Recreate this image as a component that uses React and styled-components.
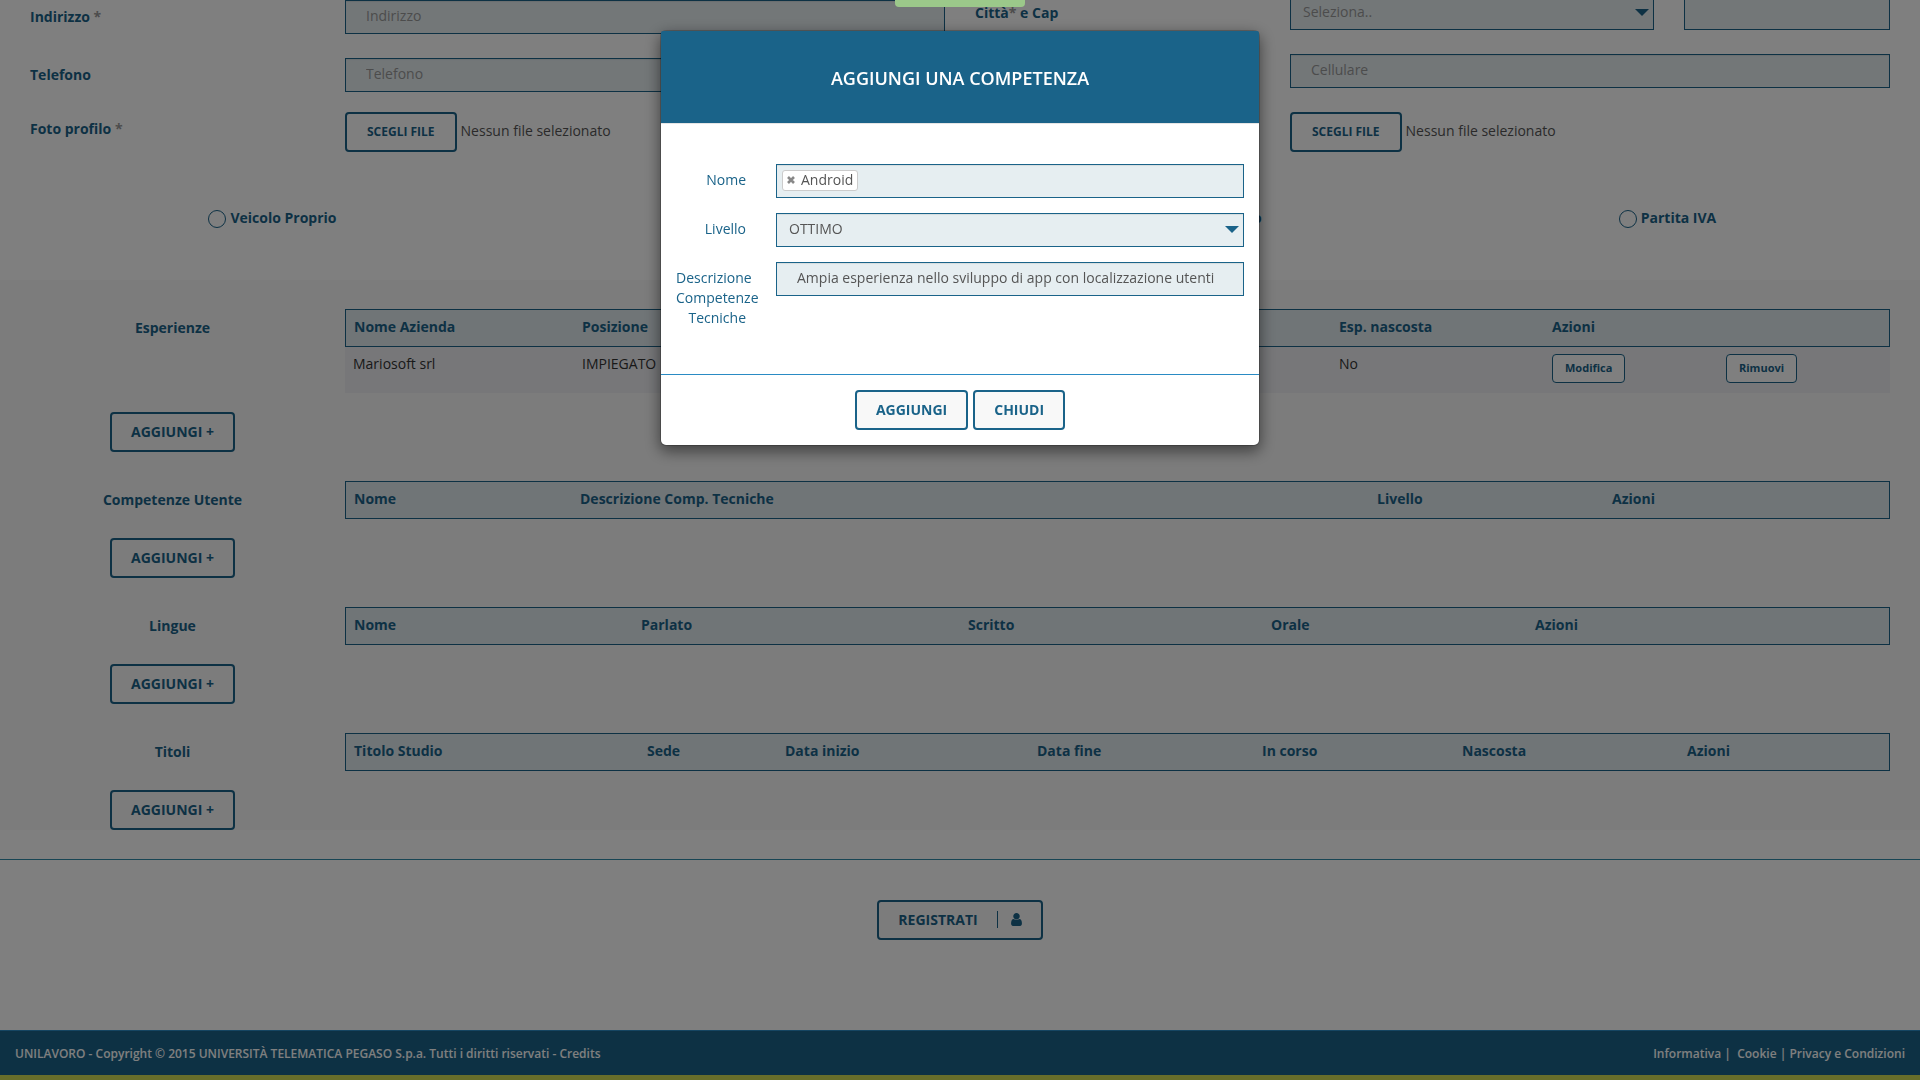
//-----import 외부
import React, { useState } from "react";
import styled, { createGlobalStyle, css } from "styled-components";

//-----테마
const colors = {
  main: "#1a6389",
  line: "#2a8bc4",
  rule: "#308ba8",
  field: "#e6eef1",
  head: "#e1eaef",
  row: "#eeeff3",
  section: "#f8f8f8",
  text: "#555555",
  placeholder: "#999999",
  green: "#9bc88a",
  olive: "#cfdc56",
};

//-----데이터
const sections = [
  {
    title: "Esperienze",
    columns: [
      { name: "Nome Azienda", width: 229 },
      { name: "Posizione", width: 757 },
      { name: "Esp. nascosta", width: 213 },
      { name: "Azioni", width: 174 },
      { name: "", width: 172 },
    ],
    rows: [["Mariosoft srl", "IMPIEGATO", "No"]],
  },
  {
    title: "Competenze Utente",
    columns: [
      { name: "Nome", width: 227 },
      { name: "Descrizione Comp. Tecniche", width: 797 },
      { name: "Livello", width: 235 },
      { name: "Azioni", width: 286 },
    ],
    rows: [],
  },
  {
    title: "Lingue",
    columns: [
      { name: "Nome", width: 288 },
      { name: "Parlato", width: 327 },
      { name: "Scritto", width: 303 },
      { name: "Orale", width: 264 },
      { name: "Azioni", width: 363 },
    ],
    rows: [],
  },
  {
    title: "Titoli",
    columns: [
      { name: "Titolo Studio", width: 294 },
      { name: "Sede", width: 138 },
      { name: "Data inizio", width: 252 },
      { name: "Data fine", width: 225 },
      { name: "In corso", width: 200 },
      { name: "Nascosta", width: 225 },
      { name: "Azioni", width: 211 },
    ],
    rows: [],
  },
];
const options = [
  { name: "Veicolo Proprio", column: 1 },
  { name: "Lavoro estero", column: 3 },
  { name: "Partita IVA", column: 4 },
];

//-----파일 선택
function FilePicker({ id }) {
  return (
    <FileBox>
      <FileInput type="file" id={id} />
      <FileButton htmlFor={id}>SCEGLI FILE</FileButton>
      <FileStatus>Nessun file selezionato</FileStatus>
    </FileBox>
  );
}

//-----목록 섹션 (제목 + 표 + 추가 버튼)
function ListSection({ title, columns, rows }) {
  return (
    <SectionRow>
      <SectionTitle>{title}</SectionTitle>
      <TableBox>
        <Table>
          <colgroup>
            {columns.map((col, i) => (
              <Col key={i} $width={col.width} />
            ))}
          </colgroup>
          <thead>
            <tr>
              {columns.map((col, i) => (
                <Th key={i}>{col.name}</Th>
              ))}
            </tr>
          </thead>
          <tbody>
            {rows.map((row, i) => (
              <tr key={i}>
                {row.map((cell) => (
                  <Td key={cell}>{cell}</Td>
                ))}
                <Td>
                  <SmallButton type="button">Modifica</SmallButton>
                </Td>
                <Td>
                  <SmallButton type="button">Rimuovi</SmallButton>
                </Td>
              </tr>
            ))}
          </tbody>
        </Table>
      </TableBox>
      <AddBox>
        <Button type="button">AGGIUNGI +</Button>
      </AddBox>
    </SectionRow>
  );
}

//-----모달
function SkillModal() {
  const [level, setLevel] = useState("OTTIMO");
  const [description, setDescription] = useState(
    "Ampia esperienza nello sviluppo di app con localizzazione utenti"
  );

  return (
    <Modal role="dialog" aria-labelledby="modal-title">
      <ModalHeader>
        <ModalTitle id="modal-title">AGGIUNGI UNA COMPETENZA</ModalTitle>
      </ModalHeader>
      <ModalBody>
        <ModalRow>
          <ModalLabel htmlFor="skill-name">Nome</ModalLabel>
          <TokenField>
            <Token>
              <TokenRemove type="button" aria-label="Rimuovi Android">
                <svg viewBox="0 0 8 8" width="8" height="8">
                  <path
                    d="M1 1 L7 7 M7 1 L1 7"
                    stroke="currentColor"
                    strokeWidth="2.6"
                  />
                </svg>
              </TokenRemove>
              Android
            </Token>
            <TokenInput id="skill-name" type="text" />
          </TokenField>
        </ModalRow>
        <ModalRow>
          <ModalLabel htmlFor="skill-level">Livello</ModalLabel>
          <SelectBox>
            <Select
              id="skill-level"
              value={level}
              onChange={(e) => setLevel(e.target.value)}
            >
              <option>OTTIMO</option>
              <option>BUONO</option>
            </Select>
            <Arrow />
          </SelectBox>
        </ModalRow>
        <ModalRow>
          <ModalLabel htmlFor="skill-description">
            Descrizione Competenze Tecniche
          </ModalLabel>
          <Input
            id="skill-description"
            type="text"
            value={description}
            onChange={(e) => setDescription(e.target.value)}
          />
        </ModalRow>
      </ModalBody>
      <ModalFooter>
        <Button type="button">AGGIUNGI</Button>
        <Button type="button">CHIUDI</Button>
      </ModalFooter>
    </Modal>
  );
}

//-----메인
function App() {
  return (
    <>
      <GlobalStyle />
      <Page>
        <main>
          <FieldColumns>
            <LeftColumn>
              <FieldRow>
                <Label htmlFor="address">
                  Indirizzo <Star>*</Star>
                </Label>
                <Input id="address" type="text" placeholder="Indirizzo" />
              </FieldRow>
              <FieldRow>
                <Label htmlFor="phone">Telefono</Label>
                <Input id="phone" type="text" placeholder="Telefono" />
              </FieldRow>
            </LeftColumn>
            <Column>
              <FieldRow>
                <Label htmlFor="city">
                  Città<Star>*</Star> e Cap
                </Label>
                <CityBox>
                  <SelectBox>
                    <Select id="city" $empty defaultValue="">
                      <option value="">Seleziona..</option>
                    </Select>
                    <Arrow />
                  </SelectBox>
                  <Input type="text" aria-label="Cap" />
                </CityBox>
              </FieldRow>
              <FieldRow>
                <span />
                <Input
                  type="text"
                  placeholder="Cellulare"
                  aria-label="Cellulare"
                />
              </FieldRow>
            </Column>
            <FieldRow>
              <Label htmlFor="photo">
                Foto profilo <Star>*</Star>
              </Label>
              <FilePicker id="photo" />
            </FieldRow>
            <FieldRow>
              <span />
              <FilePicker id="attachment" />
            </FieldRow>
          </FieldColumns>

          <RadioRow>
            {options.map(({ name, column }) => (
              <RadioLabel key={name} $column={column}>
                <Radio type="radio" name={name} />
                {name}
              </RadioLabel>
            ))}
          </RadioRow>

          <Sections>
            {sections.map((section) => (
              <ListSection key={section.title} {...section} />
            ))}
          </Sections>

          <SubmitBox>
            <Button type="submit">
              REGISTRATI
              <IconBox>
                <svg viewBox="0 128 1280 1536" width="11" height="13">
                  <path
                    fill="currentColor"
                    d="M1280 1399q0 109-62.5 187t-150.5 78h-854q-88 0-150.5-78t-62.5-187q0-85 8.5-160.5t31.5-152 58.5-131 94-89 134.5-34.5q131 128 313 128t313-128q76 0 134.5 34.5t94 89 58.5 131 31.5 152 8.5 160.5zM1024 512q0 159-112.5 271.5t-271.5 112.5-271.5-112.5-112.5-271.5 112.5-271.5 271.5-112.5 271.5 112.5 112.5 271.5z"
                  />
                </svg>
              </IconBox>
            </Button>
          </SubmitBox>
        </main>

        <Footer>
          <span>
            UNILAVORO - Copyright © 2015 UNIVERSITÀ TELEMATICA PEGASO S.p.a.
            Tutti i diritti riservati - <FooterLink href="#">Credits</FooterLink>
          </span>
          <span>
            <FooterLink href="#">Informativa</FooterLink> |&nbsp;{" "}
            <FooterLink href="#">Cookie</FooterLink> |{" "}
            <FooterLink href="#">Privacy e Condizioni</FooterLink>
          </span>
        </Footer>
      </Page>

      <Overlay>
        <Notice />
        <SkillModal />
      </Overlay>
    </>
  );
}

export default App;

//-----스타일
const GlobalStyle = createGlobalStyle`
  * {
    box-sizing: border-box;
  }
  body {
    margin: 0;
    background-color: #ffffff;
    color: ${colors.text};
    font-family: "Open Sans", "Noto Sans", sans-serif;
    font-size: 14px;
    line-height: 20px;
  }
  button, input, select {
    font-family: inherit;
    font-size: 14px;
  }
`;

//공통 컨트롤
const fieldStyle = css`
  width: 100%;
  height: 34px;
  background-color: ${colors.field};
  border: 1px solid ${colors.main};
  border-radius: 0;
  box-shadow: inset 0 1px 1px rgba(0, 0, 0, 0.075);
  color: ${colors.text};
`;
const buttonStyle = css`
  display: inline-flex;
  align-items: center;
  justify-content: center;
  height: 40px;
  padding: 0 19px 2px;
  background-color: ${colors.section};
  border: 2px solid ${colors.main};
  border-radius: 4px;
  color: ${colors.main};
  font-weight: 700;
  cursor: pointer;
`;
const Input = styled.input`
  ${fieldStyle}
  min-width: 0;
  padding: 0 20px 4px;

  &::placeholder {
    color: ${colors.placeholder};
  }
`;
const SelectBox = styled.div`
  position: relative;
`;
const Select = styled.select`
  ${fieldStyle}
  appearance: none;
  padding: 0 24px 4px 12px;
  ${(props) => props.$empty && `color: ${colors.placeholder};`}
`;
const Arrow = styled.span`
  position: absolute;
  top: 13px;
  right: 5px;
  border: 7px solid transparent;
  border-top-color: ${colors.main};
  border-bottom: 0;
  pointer-events: none;
`;
const Button = styled.button`
  ${buttonStyle}
`;
const SmallButton = styled.button`
  height: 29px;
  padding: 0 12px 2px;
  background-color: #ffffff;
  border: 1px solid ${colors.main};
  border-radius: 4px;
  color: ${colors.main};
  font-size: 11px;
  font-weight: 700;
`;

//페이지
const Page = styled.div`
  overflow: hidden;
`;
const FieldColumns = styled.div`
  display: grid;
  grid-template-columns: 1fr 1fr;
  row-gap: 20px;
  margin-top: -4px;
  padding: 0 15px;
`;
const Column = styled.div`
  display: flex;
  flex-direction: column;
  gap: 24px;
`;
const LeftColumn = styled(Column)`
  padding-top: 4px;
`;
const FieldRow = styled.div`
  display: grid;
  grid-template-columns: calc((100% + 30px) / 3 - 15px) 1fr;
  column-gap: 15px;
  padding: 0 15px;
`;
const Label = styled.label`
  padding-top: 7px;
  color: ${colors.main};
  font-weight: 700;
`;
const Star = styled.span`
  color: ${colors.placeholder};
`;
const CityBox = styled.div`
  display: grid;
  grid-template-columns: 364fr 206fr;
  gap: 30px;
`;
const FileBox = styled.div`
  display: flex;
  align-items: center;
  gap: 4px;
`;
const FileInput = styled.input`
  position: absolute;
  width: 1px;
  height: 1px;
  opacity: 0;
`;
const FileButton = styled.label`
  ${buttonStyle}
  padding: 0 20px 1px;
  background-color: #ffffff;
  font-size: 12px;
`;
const FileStatus = styled.span`
  padding-bottom: 2px;
`;
const RadioRow = styled.div`
  display: grid;
  grid-template-columns: repeat(4, 1fr);
  padding: 56px 20px 52px 40px;
`;
const RadioLabel = styled.label`
  display: flex;
  grid-column: ${(props) => props.$column};
  justify-content: center;
  gap: 4px;
  color: ${colors.main};
  font-weight: 700;
`;
const Radio = styled.input`
  appearance: none;
  width: 18px;
  height: 18px;
  margin: 2px 0 0;
  border: 1px solid ${colors.main};
  border-radius: 50%;
`;

//목록
const Sections = styled.div`
  padding: 0 15px;
  background-color: ${colors.section};
`;
const SectionRow = styled.section`
  display: grid;
  grid-template-columns: 1fr 5fr;
  row-gap: 19px;
  padding-top: 29px;
`;
const SectionTitle = styled.h2`
  margin: 0;
  padding-top: 9px;
  color: ${colors.main};
  font-size: 14px;
  line-height: 20px;
  text-align: center;
`;
const TableBox = styled.div`
  padding: 0 15px;
`;
const Table = styled.table`
  width: 100%;
  table-layout: fixed;
  border-collapse: separate;
  border-spacing: 0;
`;
const Col = styled.col`
  width: ${(props) => props.$width}px;
`;
const Th = styled.th`
  height: 38px;
  padding: 0 8px 2px;
  background-color: ${colors.head};
  border: solid ${colors.main};
  border-width: 1px 0;
  color: ${colors.main};
  text-align: left;

  &:first-child {
    border-left-width: 1px;
  }
  &:last-child {
    border-right-width: 1px;
  }
`;
const Td = styled.td`
  height: 46px;
  padding: 7px 8px;
  background-color: ${colors.row};
  color: #333333;
  vertical-align: top;
`;
const AddBox = styled.div`
  text-align: center;
`;
const SubmitBox = styled.div`
  display: flex;
  justify-content: center;
  margin-top: 29px;
  padding: 40px 0 90px;
  border-top: 1px solid ${colors.rule};
`;
const IconBox = styled.span`
  display: flex;
  align-items: center;
  height: 17px;
  margin-left: 19px;
  padding-left: 13px;
  border-left: 1px solid ${colors.main};
`;
const Footer = styled.footer`
  display: flex;
  align-items: center;
  justify-content: space-between;
  height: 50px;
  padding: 2px 15px 0;
  background-color: ${colors.main};
  border-top: 1px solid ${colors.line};
  border-bottom: 5px solid ${colors.olive};
  color: #ffffff;
  font-size: 12px;
  font-weight: 600;
`;
const FooterLink = styled.a`
  color: inherit;
  text-decoration: none;
`;

//모달
const Overlay = styled.div`
  position: fixed;
  inset: 0;
  padding-top: 30px;
  background-color: rgba(0, 0, 0, 0.5);
`;
const Notice = styled.div`
  position: absolute;
  top: 0;
  left: 50%;
  width: 130px;
  height: 7px;
  margin-left: -65px;
  background-color: ${colors.green};
  border-radius: 0 0 4px 4px;
`;
const Modal = styled.div`
  width: 600px;
  max-width: 100%;
  margin: 0 auto;
  background-color: #ffffff;
  background-clip: padding-box;
  border: 1px solid rgba(0, 0, 0, 0.2);
  border-radius: 6px;
  box-shadow: 0 5px 15px rgba(0, 0, 0, 0.5);
`;
const ModalHeader = styled.div`
  padding: 35px 15px 33px;
  background-color: ${colors.main};
  border-bottom: 1px solid #e5e5e5;
  border-radius: 2px 2px 0 0;
`;
const ModalTitle = styled.h4`
  margin: 0;
  color: #ffffff;
  font-size: 18px;
  font-weight: 600;
  line-height: 24px;
  text-align: center;
`;
const ModalBody = styled.div`
  display: flex;
  flex-direction: column;
  gap: 15px;
  padding: 40px 0 46px;
`;
const ModalRow = styled.div`
  display: grid;
  grid-template-columns: 70px 1fr;
  column-gap: 30px;
  padding: 0 15px;
`;
const ModalLabel = styled.label`
  padding-top: 6px;
  color: ${colors.main};
  text-align: right;
`;
const TokenField = styled.div`
  ${fieldStyle}
  display: flex;
  align-items: center;
  gap: 5px;
  padding: 0 5px 2px;
`;
const Token = styled.span`
  display: flex;
  align-items: center;
  gap: 6px;
  height: 21px;
  padding: 0 4px 1px;
  background-color: #ffffff;
  border: 1px solid #cccccc;
  border-radius: 3px;
`;
const TokenRemove = styled.button`
  display: flex;
  padding: 0;
  background: none;
  border: 0;
  color: #888888;
`;
const TokenInput = styled.input`
  flex: 1;
  min-width: 0;
  background: none;
  border: 0;
  outline: 0;
`;
const ModalFooter = styled.div`
  display: flex;
  justify-content: center;
  gap: 5px;
  padding: 15px;
  border-top: 1px solid ${colors.line};
`;
